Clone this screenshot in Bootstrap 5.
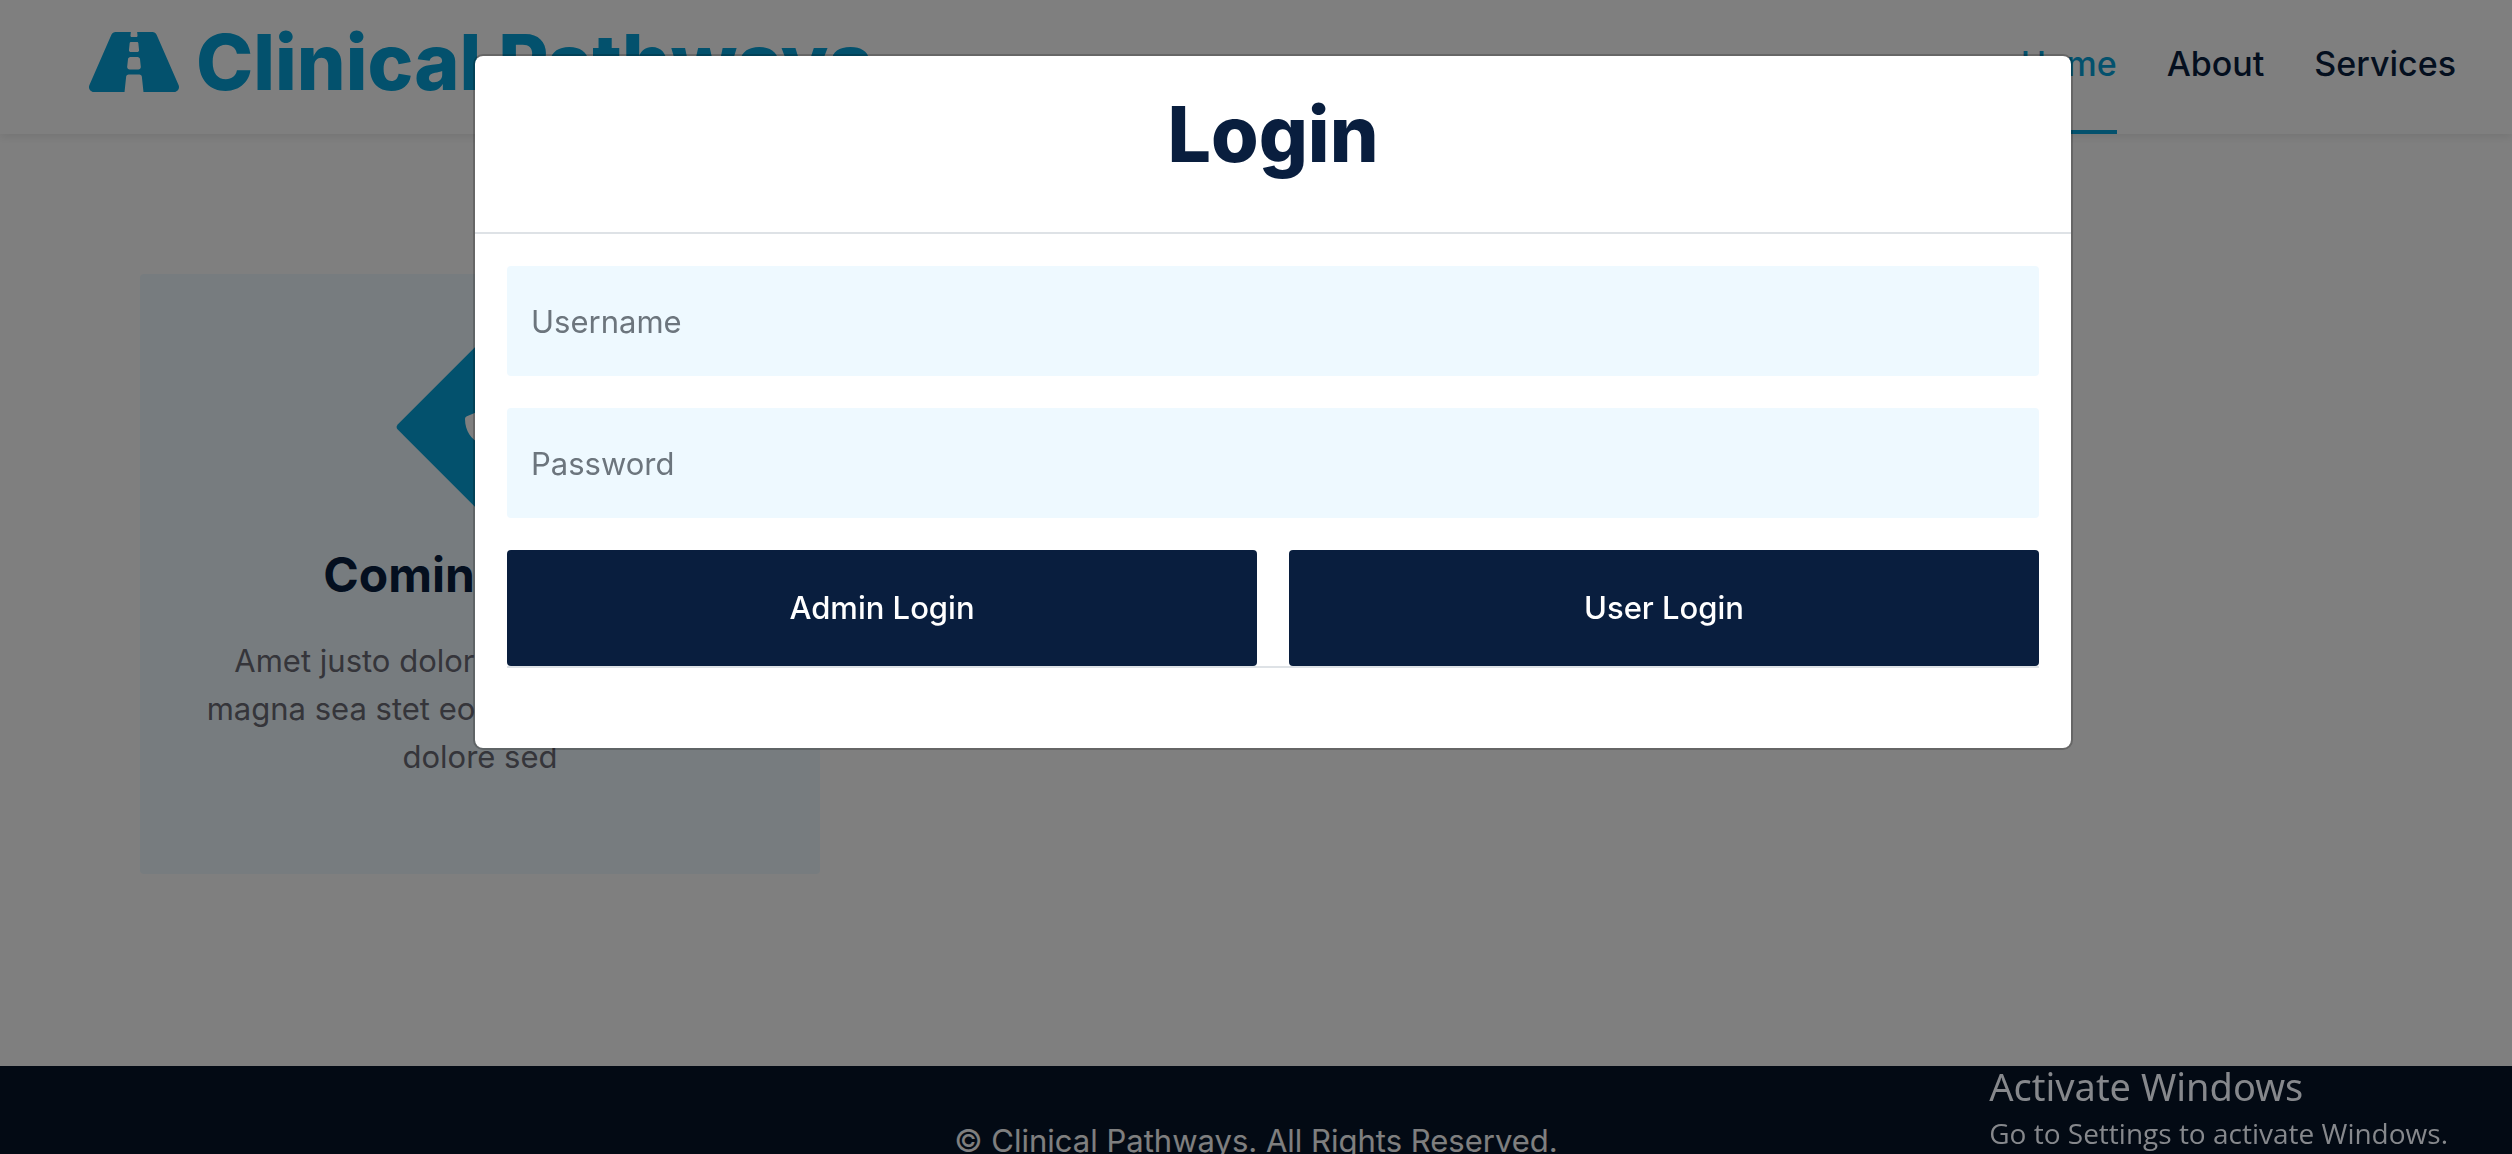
<!DOCTYPE html>
<html lang="en">
<head>
<meta charset="utf-8">
<meta name="viewport" content="width=device-width, initial-scale=1">
<title>Clinical Pathways</title>
<link href="https://cdn.jsdelivr.net/npm/bootstrap@5.3.0/dist/css/bootstrap.min.css" rel="stylesheet">
<style>
  :root { --brand: #06a3da; --navy: #091e3e; --pale: #eef9ff; --ink: #6b6a75; }
  html { font-size: 32px; }
  body { height: 100vh; overflow: hidden; background: #fff; color: var(--ink); font-family: Inter, "Open Sans", sans-serif; font-size: 31px; line-height: 48px; }
  .site-bar { height: 134px; padding: 0 56px 0 88px; box-shadow: 0 4px 8px rgba(0, 0, 0, .08); }
  .brand-name { font-size: 77px; font-weight: 800; line-height: 124px; color: var(--brand); }
  .brand-name svg { width: 92px; height: 80px; margin-right: 16px; }
  .site-bar .nav-link { padding: 38px 0 40px; border-bottom: 4px solid transparent; font-size: 34px; line-height: 52px; font-weight: 500; color: var(--navy); }
  .site-bar .nav-link.active { color: var(--brand); border-color: var(--brand); }
  .site-nav { gap: 50px; }
  .services { padding: 140px 0 192px; }
  .services .container { max-width: 2280px; }
  .service-item { height: 600px; padding: 0 60px; background: var(--pale); border-radius: 4px; }
  .diamond { width: 120px; height: 120px; margin-bottom: 60px; background: var(--brand); border-radius: 4px; transform: rotate(45deg); }
  .diamond svg { width: 32px; height: 32px; transform: rotate(-45deg); }
  .service-item h4 { margin-bottom: 34px; font-size: 48px; line-height: 56px; font-weight: 700; color: var(--navy); }
  .site-footer { padding: 51px 0; background: #061429; color: #fff; }
  .modal { padding-left: 34px; }
  .login-dialog { max-width: 1600px; margin-top: 54px; }
  .login-dialog .modal-content { border: 2px solid rgba(0, 0, 0, .2); border-radius: 10px; }
  .login-dialog .modal-header { height: 178px; padding-top: 30px; align-items: flex-start; border-bottom: 2px solid #dee2e6; border-radius: 0; }
  .login-dialog h2 { font-size: 77px; line-height: 96px; font-weight: 800; color: var(--navy); }
  .login-field { height: 110px; padding: 12px 24px; border: 0; border-radius: 4px; background: var(--pale); font-size: 31px; }
  .login-field::placeholder { color: #6c757d; }
  .login-btn { height: 116px; border: 0; border-radius: 4px; background: var(--navy); color: #fff; font-size: 31px; font-weight: 500; }
  .login-btn:hover { background: #12305e; color: #fff; }
  .form-end { border-top: 2px solid #dee2e6; padding-bottom: 48px; }
  .os-notice { right: 64px; bottom: 0; z-index: 1080; color: #86888c; font-family: "Noto Sans", "Open Sans", sans-serif; pointer-events: none; }
  .notice-title { font-size: 38px; line-height: 52px; }
  .notice-text { font-family: "Open Sans", sans-serif; font-size: 28px; line-height: 42px; }
</style>
</head>
<body class="modal-open">

<nav class="navbar site-bar align-items-start justify-content-between flex-nowrap">
  <a href="#" class="navbar-brand m-0 p-0">
    <h1 class="brand-name d-flex align-items-center m-0"><svg viewBox="0 0 576 512" fill="currentColor" aria-hidden="true"><path d="M573.19 402.67l-139.79-320C428.43 71.29 417.6 64 405.68 64h-97.59l2.45 23.16c.5 4.72-3.21 8.84-7.96 8.84h-29.16c-4.75 0-8.46-4.12-7.96-8.84L267.91 64h-97.59c-11.93 0-22.76 7.29-27.73 18.67L2.8 402.67C-6.45 423.86 8.31 448 30.54 448h196.84l10.31-97.68c.86-8.14 7.72-14.32 15.91-14.32h68.8c8.19 0 15.05 6.18 15.91 14.32L348.62 448h196.84c22.23 0 36.99-24.14 27.73-45.33zM260.4 135.16a8 8 0 0 1 7.96-7.16h39.29c4.09 0 7.53 3.09 7.96 7.16l4.6 43.58c.75 7.09-4.8 13.26-11.93 13.26h-40.54c-7.13 0-12.68-6.17-11.93-13.26l4.59-43.58zM315.64 304h-55.29c-9.5 0-16.91-8.23-15.91-17.68l5.07-48c.86-8.14 7.72-14.32 15.91-14.32h45.15c8.19 0 15.05 6.18 15.91 14.32l5.07 48c1 9.45-6.41 17.68-15.91 17.68z"/></svg>Clinical Pathways</h1>
  </a>
  <div class="site-nav navbar-nav flex-row">
    <a href="#" class="nav-link active" aria-current="page">Home</a>
    <a href="#" class="nav-link">About</a>
    <a href="#" class="nav-link">Services</a>
  </div>
</nav>

<main class="services">
  <div class="container">
    <div class="row gx-5">
      <div class="col-4">
        <div class="service-item d-flex flex-column align-items-center justify-content-center text-center">
          <div class="diamond d-flex align-items-center justify-content-center">
            <svg viewBox="0 0 512 512" fill="#fff" aria-hidden="true"><path d="M466.5 83.7l-192-80a48.15 48.15 0 0 0-36.9 0l-192 80C27.7 91.1 16 108.6 16 128c0 198.5 114.5 335.7 221.5 380.3 11.8 4.9 25.1 4.9 36.9 0C360.1 472.6 496 349.3 496 128c0-19.4-11.7-36.9-29.5-44.3zM256.1 446.3l-.1-381 175.9 73.3c-3.3 151.4-82.1 261.1-175.8 307.7z"/></svg>
          </div>
          <h4>Coming Soon</h4>
          <p class="m-0">Amet justo dolor lorem kasd amet magna sea stet eos vero lorem ipsum dolore sed</p>
        </div>
      </div>
    </div>
  </div>
</main>

<footer class="site-footer text-center">
  <p class="m-0">© Clinical Pathways. All Rights Reserved.</p>
</footer>

<div class="modal-backdrop show"></div>
<div class="modal show d-block" tabindex="-1" role="dialog" aria-modal="true" aria-labelledby="loginTitle">
  <div class="modal-dialog login-dialog">
    <div class="modal-content">
      <div class="modal-header justify-content-center">
        <h2 id="loginTitle">Login</h2>
      </div>
      <div class="modal-body">
        <form>
          <div class="row g-3">
            <div class="col-12"><input type="text" class="form-control login-field" placeholder="Username" aria-label="Username"></div>
            <div class="col-12"><input type="password" class="form-control login-field" placeholder="Password" aria-label="Password"></div>
            <div class="col-6"><button type="button" class="btn login-btn w-100">Admin Login</button></div>
            <div class="col-6"><button type="button" class="btn login-btn w-100">User Login</button></div>
          </div>
          <div class="form-end"></div>
        </form>
      </div>
    </div>
  </div>
</div>

<aside class="os-notice position-fixed">
  <div class="notice-title">Activate Windows</div>
  <div class="notice-text">Go to Settings to activate Windows.</div>
</aside>

<script src="https://cdn.jsdelivr.net/npm/bootstrap@5.3.0/dist/js/bootstrap.bundle.min.js"></script>
</body>
</html>
